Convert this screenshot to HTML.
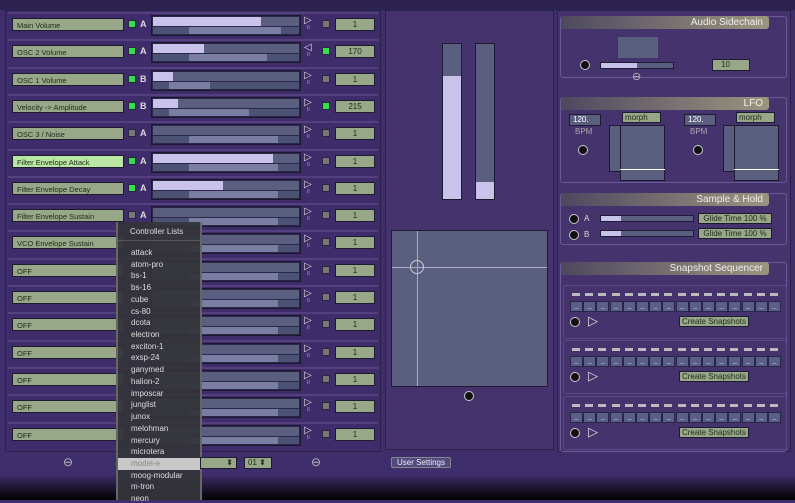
<!DOCTYPE html>
<html><head><meta charset="utf-8"><style>
*{margin:0;padding:0;box-sizing:border-box}
body{width:795px;height:500px;overflow:hidden;background:#3f2e6c;font-family:"Liberation Sans",sans-serif;position:relative}
div{position:absolute;white-space:nowrap}
.lbl{left:12px;width:112px;height:13px;background:#98a787;border:1px solid #1e1a30;font-size:7.5px;color:#1e2a1a;padding:2px 0 0 4px;overflow:hidden}
.led{width:8px;height:8px;border:1px solid #2a2540}
.g{background:#34e04a}.o{background:#777}
.let{font-size:9px;color:#ddd;font-weight:bold}
.sl{left:151px;width:150px;height:21px;background:#2c2748;border:1px solid #1c1830}
.val{left:335px;width:40px;height:13px;background:#98a787;border:1px solid #1e1a30;font-size:8px;text-align:center;color:#1e2a1a;line-height:11px}
.sep{left:8px;width:370px;height:2px;background:#54407f}
.box{border:1px solid #6a5a95;border-radius:3px}
.hdr{height:13px;background:linear-gradient(90deg,#4e4860,#9b957f);color:#eee;font-size:10px;text-align:right;padding-right:6px;line-height:13px;border-radius:0 3px 3px 0}
.dot{width:10px;height:10px;border-radius:50%;background:#111;border:1.5px solid #ccc}
.gb{background:#98a787;border:1px solid #1e1a30;font-size:8px;color:#1e2a1a;text-align:center;line-height:10px}
.mi{left:131px;font-size:8px;color:#ddd}
</style></head><body>
<div style="left:0;top:0;width:795px;height:10px;background:#2d2350"></div>
<div style="left:0;top:476px;width:795px;height:24px;background:linear-gradient(#3a2a62,#000)"></div>
<div style="left:5px;top:10px;width:376px;height:442px;border:1px solid #2a2248;background:#3e2d6a"></div>
<div style="left:385px;top:10px;width:169px;height:440px;border:1px solid #2a2248;background:#45336e"></div>
<div style="left:557px;top:10px;width:234px;height:442px;border:1px solid #2a2248;background:#45336e"></div>
<div id="rows"></div>
<div style="left:442px;top:43px;width:20px;height:157px;background:#5a5f80;border:1px solid #1e1a34"><div style="left:0;bottom:0;width:18px;height:123px;background:#c9c2ea"></div></div>
<div style="left:475px;top:43px;width:20px;height:157px;background:#5a5f80;border:1px solid #1e1a34"><div style="left:0;bottom:0;width:18px;height:17px;background:#c9c2ea"></div></div>
<div style="left:391px;top:230px;width:157px;height:157px;background:#5a5f80;border:1px solid #1e1a34"></div>
<div style="left:392px;top:267px;width:155px;height:1px;background:#aaa8c8"></div>
<div style="left:417px;top:231px;width:1px;height:155px;background:#aaa8c8"></div>
<div style="left:410px;top:260px;width:14px;height:14px;border:1px solid #ccc;border-radius:50%"></div>
<div class="dot" style="left:464px;top:391px"></div>
<div class="box" style="left:560px;top:16px;width:227px;height:62px"></div>
<div class="hdr" style="left:561px;top:16px;width:208px">Audio Sidechain</div>
<div style="left:618px;top:37px;width:40px;height:21px;background:#5a5f80"></div>
<div class="dot" style="left:580px;top:60px"></div>
<div style="left:600px;top:62px;width:74px;height:7px;background:#5a5f80;border:1px solid #1e1a34"><div style="left:0;top:0;width:36px;height:5px;background:#c9c2ea"></div></div>
<div style="left:632px;top:70px;font-size:11px;color:#bbb">⊖</div>
<div class="gb" style="left:712px;top:59px;width:38px;height:12px;text-align:left;padding-left:8px">10</div>
<div class="box" style="left:560px;top:97px;width:227px;height:86px"></div>
<div class="hdr" style="left:561px;top:97px;width:208px">LFO</div>
<div class="gb" style="left:569px;top:114px;width:32px;height:12px;background:#5a5f80;color:#fff;text-align:left;padding-left:3px">120.</div>
<div style="left:575px;top:127px;font-size:8px;color:#aaa">BPM</div>
<div class="dot" style="left:578px;top:145px"></div>
<div class="gb" style="left:622px;top:112px;width:39px;height:11px;text-align:left;padding-left:2px">morph</div>
<div style="left:609px;top:125px;width:12px;height:47px;background:#5a5f80;border:1px solid #1e1a34"></div>
<div style="left:620px;top:125px;width:45px;height:56px;background:#5a5f80;border:1px solid #1e1a34"></div>
<div style="left:620px;top:169px;width:45px;height:1px;background:#fff"></div>
<div class="gb" style="left:684px;top:114px;width:32px;height:12px;background:#5a5f80;color:#fff;text-align:left;padding-left:3px">120.</div>
<div style="left:690px;top:127px;font-size:8px;color:#aaa">BPM</div>
<div class="dot" style="left:693px;top:145px"></div>
<div class="gb" style="left:736px;top:112px;width:39px;height:11px;text-align:left;padding-left:2px">morph</div>
<div style="left:723px;top:125px;width:12px;height:47px;background:#5a5f80;border:1px solid #1e1a34"></div>
<div style="left:734px;top:125px;width:45px;height:56px;background:#5a5f80;border:1px solid #1e1a34"></div>
<div style="left:734px;top:169px;width:45px;height:1px;background:#fff"></div>
<div class="box" style="left:560px;top:193px;width:227px;height:52px"></div>
<div class="hdr" style="left:561px;top:193px;width:208px">Sample &amp; Hold</div>
<div class="dot" style="left:569px;top:214px"></div><div style="left:584px;top:214px;font-size:8px;color:#ddd">A</div>
<div class="dot" style="left:569px;top:230px"></div><div style="left:584px;top:230px;font-size:8px;color:#ddd">B</div>
<div style="left:600px;top:215px;width:94px;height:7px;background:#5a5f80;border:1px solid #1e1a34"><div style="left:0;top:0;width:20px;height:5px;background:#c9c2ea"></div></div>
<div style="left:600px;top:230px;width:94px;height:7px;background:#5a5f80;border:1px solid #1e1a34"><div style="left:0;top:0;width:20px;height:5px;background:#c9c2ea"></div></div>
<div class="gb" style="left:698px;top:213px;width:74px;height:11px">Glide Time 100 %</div>
<div class="gb" style="left:698px;top:228px;width:74px;height:11px">Glide Time 100 %</div>
<div class="box" style="left:560px;top:262px;width:227px;height:190px"></div>
<div class="hdr" style="left:561px;top:262px;width:208px">Snapshot Sequencer</div>
<div id="snap"></div>
<div style="left:116px;top:222px;width:86px;height:278px;background:rgba(52,52,58,0.94);border-left:2px solid #666;border-right:2px solid #666"></div>
<div style="left:130px;top:227px;font-size:8px;color:#ddd">Controller Lists</div>
<div style="left:118px;top:240px;width:82px;height:1px;background:#555"></div>
<div style="left:118px;top:458px;width:82px;height:12px;background:#c8c8c8"></div>
<div id="menu"></div>
<div style="left:63px;top:455px;font-size:12px;color:#bbb">⊖</div>
<div style="left:311px;top:455px;font-size:12px;color:#bbb">⊖</div>
<div class="gb" style="left:200px;top:457px;width:37px;height:12px;text-align:right;padding-right:3px">⬍</div>
<div class="gb" style="left:244px;top:457px;width:28px;height:12px;text-align:left;padding-left:3px">01 ⬍</div>
<div style="left:391px;top:457px;width:60px;height:11px;background:#514a80;border:1px solid #888;border-radius:2px;font-size:8px;color:#eee;text-align:center;line-height:9px">User Settings</div>
<script>
var L=["Main Volume","OSC 2 Volume","OSC 1 Volume","Velocity -> Amplitude","OSC 3 / Noise","Filter Envelope Attack","Filter Envelope Decay","Filter Envelope Sustain","VCO Envelope Sustain","OFF","OFF","OFF","OFF","OFF","OFF","OFF"];
var LT=["A","A","B","B","A","A","A","A","","","","","","","",""];
var LG=[1,1,1,1,0,1,1,0];
var F=[0.74,0.35,0.14,0.17,0,0.82,0.48,0,0,0,0,0,0,0,0,0];
var BS=[[37,129],[37,115],[17,58],[17,97]];
var RV=["1","170","1","215"],RG=[0,1,0,1];
var h="";
for(var i=0;i<16;i++){var y=Math.round(18+i*27.3);
h+='<div class="sep" style="top:'+(y-6)+'px"></div>';
h+='<div class="lbl" style="top:'+y+'px;'+(i==5?'background:#b9e6a2':'')+'">'+L[i]+'</div>';
if(i<8){h+='<div class="led '+(LG[i]?'g':'o')+'" style="left:128px;top:'+(y+2)+'px"></div><div class="let" style="left:140px;top:'+(y+1)+'px">'+LT[i]+'</div>';}
var b=BS[i]||[37,126];
h+='<div class="sl" style="top:'+(y-3)+'px"><div style="left:1px;top:1px;width:146px;height:9px;background:#5a5f80"></div><div style="left:1px;top:1px;width:'+Math.round(146*F[i])+'px;height:9px;background:#c9c2ea"></div><div style="left:1px;top:11px;width:146px;height:7px;background:#4c5274"></div><div style="left:'+b[0]+'px;top:11px;width:'+(b[1]-b[0])+'px;height:7px;background:#7a7ea2"></div></div>';
h+='<div style="left:304px;top:'+(y-3)+'px;font-size:10px;color:#ddd">'+(i==1?'◁':'▷')+'</div><div style="left:307px;top:'+(y+7)+'px;font-size:5px;color:#aaa">II</div>';
h+='<div class="led '+(RG[i]?'g':'o')+'" style="left:322px;top:'+(y+2)+'px"></div>';
h+='<div class="val" style="top:'+y+'px">'+(RV[i]||"1")+'</div>';}
document.getElementById("rows").innerHTML=h;
var s="";[285,340,396].forEach(function(t){s+='<div class="box" style="left:563px;top:'+t+'px;width:224px;height:54px;border-color:#5a4a85"></div>';
for(var k=0;k<16;k++){var x=570+k*13.2;s+='<div style="left:'+(x+2)+'px;top:'+(t+8)+'px;width:8px;height:3px;background:#bbb"></div><div style="left:'+x+'px;top:'+(t+16)+'px;width:13px;height:11px;background:#5a5f8a;border:1px solid #2a2548;font-size:7px;color:#ccc;text-align:center;line-height:8px">_</div>';}
s+='<div class="dot" style="left:570px;top:'+(t+32)+'px"></div><div style="left:588px;top:'+(t+28)+'px;font-size:13px;color:#ddd">▷</div><div class="gb" style="left:679px;top:'+(t+31)+'px;width:70px;height:11px">Create Snapshots</div>';});
document.getElementById("snap").innerHTML=s;
var M=["attack","atom-pro","bs-1","bs-16","cube","cs-80","dcota","electron","exciton-1","exsp-24","ganymed","halion-2","imposcar","junglist","junox","melohman","mercury","microtera","model-e","moog-modular","m-tron","neon"];
var m="";M.forEach(function(n,j){m+='<div class="mi" style="top:'+Math.round(248+j*11.72)+'px;'+(n=="model-e"?'color:#888':'')+'">'+n+'</div>';});
document.getElementById("menu").innerHTML=m;
</script>
</body></html>
